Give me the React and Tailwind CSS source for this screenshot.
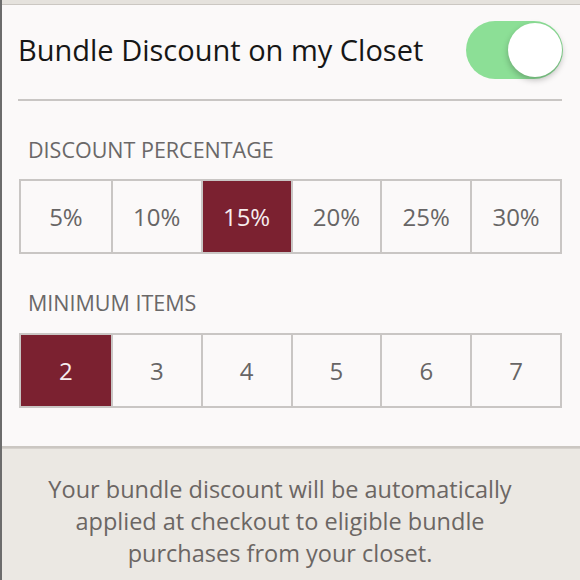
import { useState } from "react";

const percents = ["5%", "10%", "15%", "20%", "25%", "30%"];
const counts = ["2", "3", "4", "5", "6", "7"];

const OptionRow = ({ options, selected, onSelect }) => (
  <div className="ml-[17px] mr-[18px] grid grid-cols-6 border-2 border-[#c9c6c4]">
    {options.map((opt, i) => (
      <button
        key={opt}
        onClick={() => onSelect(opt)}
        className={`flex h-[71px] items-center justify-center text-[24px] ${
          i > 0 ? "border-l-2 border-[#c9c6c4]" : ""
        } ${
          opt === selected
            ? "bg-[#7b2130] text-[#f6ecee]"
            : "bg-[#fbf9f9] text-[#676565]"
        }`}
      >
        {opt}
      </button>
    ))}
  </div>
);

export default function App() {
  const [enabled, setEnabled] = useState(true);
  const [percent, setPercent] = useState("15%");
  const [minItems, setMinItems] = useState("2");

  return (
    <div
      className="h-[580px] w-[580px] overflow-hidden border-l-2 border-[#6c6c6c] bg-[#ebe8e3]"
      style={{ fontFamily: "'Open Sans', sans-serif" }}
    >
      <div className="h-[4px] bg-[#e5e2dd]" />
      <div className="border-t border-[#cbc7c2] border-b-2 bg-[#fbf9f9] pb-[38px]">
        <div className="flex h-[94px] items-center justify-between pb-[4px] pl-[16px] pr-[17px]">
          <h1 className="text-[29px] leading-[40px] text-[#161616]">Bundle Discount on my Closet</h1>
          <button
            onClick={() => setEnabled(!enabled)}
            className={`relative h-[58px] w-[97px] shrink-0 rounded-full ${
              enabled ? "bg-[#8cdf96]" : "bg-[#e5e5e5]"
            }`}
          >
            <span
              className={`absolute top-[2px] h-[54px] w-[54px] rounded-full bg-white shadow-[0_3px_6px_rgba(0,0,0,0.25)] ${
                enabled ? "right-[1px]" : "left-[2px]"
              }`}
            />
          </button>
        </div>
        <div className="ml-[16px] mr-[18px] h-[2px] bg-[#c9c6c4]" />

        <p className="mt-[37px] pl-[26px] text-[21.5px] leading-[24px] text-[#6a6868]">
          DISCOUNT PERCENTAGE
        </p>
        <div className="mt-[17px]">
          <OptionRow options={percents} selected={percent} onSelect={setPercent} />
        </div>

        <p className="mt-[37px] pl-[26px] text-[21.5px] leading-[24px] text-[#6a6868]">
          MINIMUM ITEMS
        </p>
        <div className="mt-[18px]">
          <OptionRow options={counts} selected={minItems} onSelect={setMinItems} />
        </div>
      </div>
      <div className="border-t border-[#d6d2cd]" />

      <p className="pr-[22px] pt-[24px] text-center text-[23.5px] leading-[32px] text-[#6b6663]">
        Your bundle discount will be automatically
        <br />
        applied at checkout to eligible bundle
        <br />
        purchases from your closet.
      </p>
    </div>
  );
}
